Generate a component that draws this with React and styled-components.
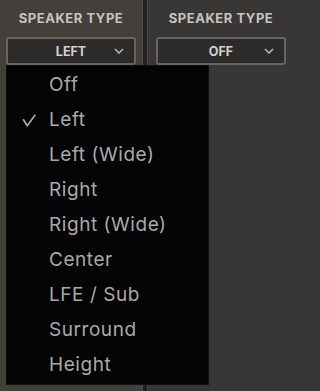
import React from "react";
import styled, { createGlobalStyle } from "styled-components";

const Global = createGlobalStyle`
  html, body { margin: 0; padding: 0; background: #393735; }
  * { box-sizing: border-box; }
`;

const Page = styled.div`
  display: flex;
  height: 391px;
  width: 100%;
  overflow: hidden;
  font-family: Inter, "Liberation Sans", sans-serif;
`;

const Column = styled.div`
  flex: ${(p) => p.$flex};
  min-width: 0;
  background: ${(p) => p.$bg};
  padding: 10px 0 0 ${(p) => p.$pad}px;
  display: flex;
  flex-direction: column;
  gap: 10px;
`;

const Divider = styled.div`
  flex: 0 0 6px;
  background: #232221;
  border-left: 1px solid #4d4a47;
  border-right: 1px solid #484644;
`;

const Title = styled.div`
  width: 130px;
  text-align: center;
  font-size: 13px;
  font-weight: 700;
  line-height: 17px;
  letter-spacing: 0.55px;
  color: #c6c4c1;
  white-space: nowrap;
`;

const SelectWrap = styled.div`
  position: relative;
  width: 130px;
  flex: 0 0 auto;
`;

const Select = styled.div`
  position: relative;
  height: 28px;
  border: 2px solid #676562;
  border-radius: 3px;
  background: #2c2b2a;
  display: flex;
  align-items: center;
  justify-content: center;
  font-size: 12.5px;
  font-weight: 700;
  color: #d2d1cf;
`;

const Chevron = styled.svg`
  position: absolute;
  right: 10px;
  top: 9px;
`;

const Menu = styled.ul`
  position: absolute;
  top: 100%;
  left: 0;
  width: 203px;
  margin: 0;
  padding: 1px 0 2px;
  list-style: none;
  background: #040404;
  border: 1px solid #111;
  z-index: 10;
`;

const Item = styled.li`
  position: relative;
  height: 35px;
  line-height: 35px;
  padding-left: 42px;
  font-size: 19px;
  letter-spacing: 0.55px;
  color: #a9a9a9;
  white-space: nowrap;
`;

const Check = styled.svg`
  position: absolute;
  left: 15px;
  top: 12px;
`;

const options = [
  "Off",
  "Left",
  "Left (Wide)",
  "Right",
  "Right (Wide)",
  "Center",
  "LFE / Sub",
  "Surround",
  "Height",
];

function SpeakerSelect({ value, open, selected }) {
  return (
    <SelectWrap>
      <Select>
        {value}
        <Chevron width="10" height="6" viewBox="0 0 10 6">
          <path d="M1 1 L5 5 L9 1" fill="none" stroke="#b4b3b1" strokeWidth="1.6" />
        </Chevron>
      </Select>
      {open && (
        <Menu>
          {options.map((o) => (
            <Item key={o}>
              {o === selected && (
                <Check width="14" height="13" viewBox="0 0 14 13">
                  <path
                    d="M1.2 5.2 L5.2 11.8 L13.3 0.8"
                    fill="none"
                    stroke="#a9a9a9"
                    strokeWidth="1.7"
                    strokeLinejoin="round"
                  />
                </Check>
              )}
              {o}
            </Item>
          ))}
        </Menu>
      )}
    </SelectWrap>
  );
}

export default function App() {
  return (
    <>
      <Global />
      <Page>
        <Column $flex="0 0 142px" $bg="#433f3b" $pad={6}>
          <Title>SPEAKER TYPE</Title>
          <SpeakerSelect value="LEFT" open selected="Left" />
        </Column>
        <Divider />
        <Column $flex="1 0 auto" $bg="#393735" $pad={8}>
          <Title>SPEAKER TYPE</Title>
          <SpeakerSelect value="OFF" />
        </Column>
      </Page>
    </>
  );
}
